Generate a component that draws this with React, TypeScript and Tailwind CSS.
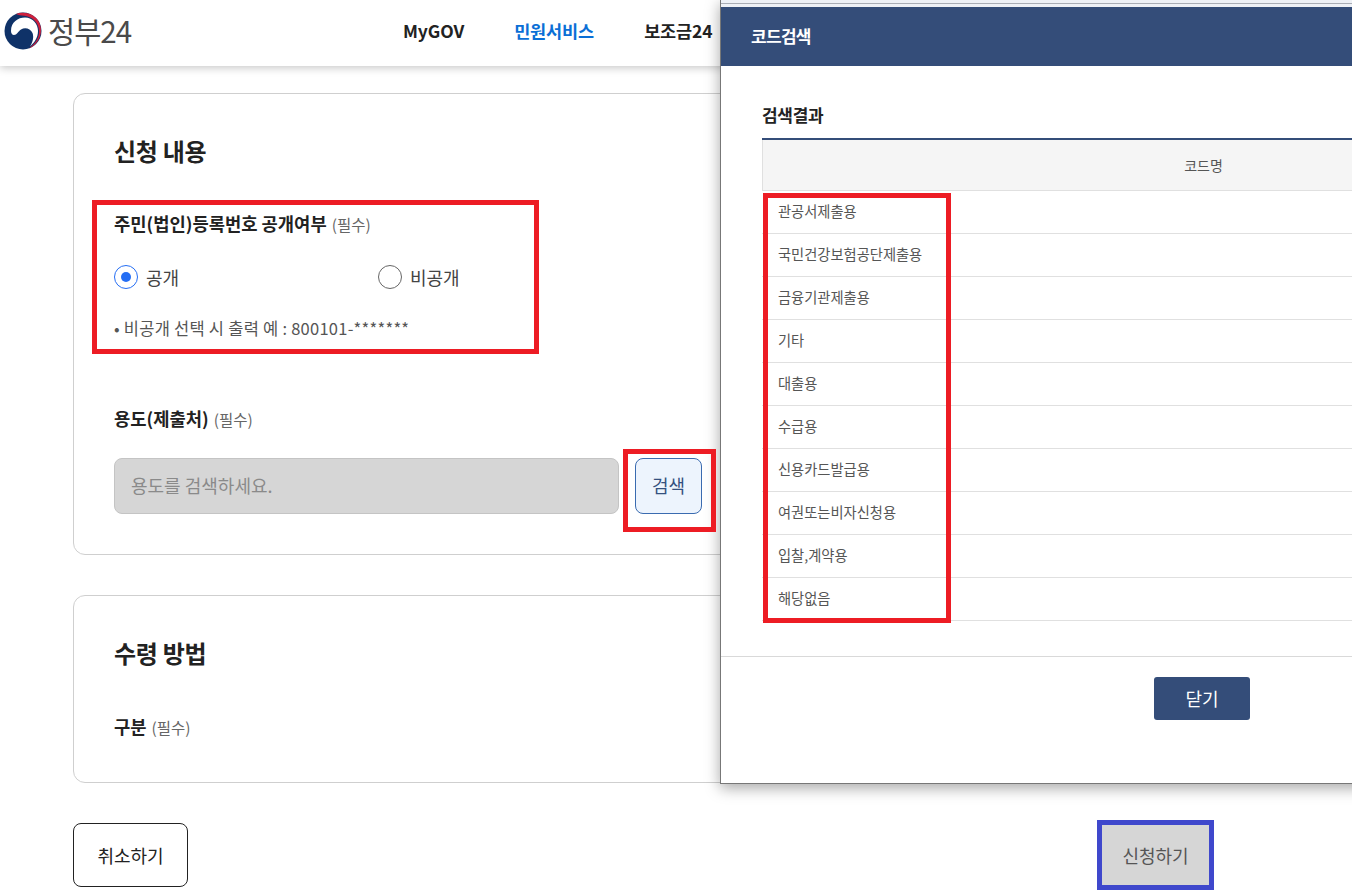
const rows = ["관공서제출용","국민건강보험공단제출용","금융기관제출용","기타","대출용","수급용","신용카드발급용","여권또는비자신청용","입찰,계약용","해당없음"];

function Logo() {
  return (
    <svg width="38" height="38" viewBox="0 0 38 38" className="shrink-0">
      <circle cx="19" cy="19" r="18.5" fill="#0f3268" />
      <path d="M7 19 C7 10 14 5.5 21 5.5 C29 5.5 34 12 34 19 C34 26 30 31 26 34.5 C29 30 30 25 28.5 21 C26.5 16.5 21 15 17 17.5 C14 19.5 13 23 10 23 C8 23 7 21 7 19 Z" fill="#ffffff" />
      <path d="M12 2 C20 -1 31 2 35 10 C39 18 37 28 28 35 L25 36.5 C32 31 35.5 25 35 18.5 C34.5 10 28 4.5 20 3.8 C17 3.5 14.5 3 12 2 Z" fill="#cd1f3c" />
    </svg>
  );
}

function Label({ text }: { text: string }) {
  return (
    <div className="flex items-baseline gap-[5px]">
      <span className="text-[17.7px] font-bold text-[#222]">{text}</span>
      <span className="text-[15.5px] text-[#666]">(필수)</span>
    </div>
  );
}

function Radio({ label, on }: { label: string; on?: boolean }) {
  return (
    <div className="flex items-center gap-[8px]">
      <span className={`w-6 h-6 rounded-full border flex items-center justify-center bg-white ${on ? "border-[#256ef4]" : "border-[#666]"}`}>
        {on && <span className="w-[10px] h-[10px] rounded-full bg-[#256ef4]" />}
      </span>
      <span className="text-[18px] text-[#444]">{label}</span>
    </div>
  );
}

export default function App() {
  return (
    <div className="relative h-[894px] w-full overflow-hidden bg-white font-['Noto_Sans_CJK_KR','Noto_Sans',sans-serif]">
      <header className="flex h-[66px] items-center bg-white pb-1 pl-1 shadow-[0_2px_8px_rgba(0,0,0,0.22)]">
        <div className="flex w-[399px] items-center gap-[6px]">
          <Logo />
          <span className="text-[29.5px] leading-none tracking-[-1px] text-[#4a4a4a]">정부24</span>
        </div>
        <nav className="flex gap-[50px] text-[17.5px] font-bold tracking-[-0.1px] text-[#222]">
          <span>MyGOV</span>
          <span className="text-[#0b6fd6]">민원서비스</span>
          <span>보조금24</span>
        </nav>
      </header>

      <main className="px-[73px] pt-[27px]">
        <section className="h-[462px] rounded-xl border border-[#cfcfcf] px-10 pt-[37px]">
          <h2 className="text-[24px] leading-[40px] font-bold tracking-[-0.3px] text-[#222]">신청 내용</h2>
          <div className="mt-[39px]">
            <Label text="주민(법인)등록번호 공개여부" />
          </div>
          <div className="mt-[27px] flex">
            <div className="w-[264px]"><Radio label="공개" on /></div>
            <Radio label="비공개" />
          </div>
          <p className="mt-[25px] text-[16.5px] tracking-[0.25px] text-[#555]">• 비공개 선택 시 출력 예 : 800101-*******</p>
          <div className="mt-[65px]">
            <Label text="용도(제출처)" />
          </div>
          <div className="mt-[26px] flex gap-4">
            <div className="flex h-14 w-[505px] items-center rounded-lg border border-[#c4c4c4] bg-[#d6d6d6] px-4 text-[18px] text-[#8a8a8a]">용도를 검색하세요.</div>
            <button className="h-14 w-[67px] rounded-lg border border-[#3a6bb0] bg-[#edf4fd] text-[18px] text-[#34507f]">검색</button>
          </div>
        </section>

        <section className="mt-10 h-[188px] rounded-xl border border-[#cfcfcf] px-10 pt-[37px]">
          <h2 className="text-[24px] leading-[40px] font-bold tracking-[-0.3px] text-[#222]">수령 방법</h2>
          <div className="mt-[40px]">
            <Label text="구분" />
          </div>
        </section>

        <div className="mt-10 flex">
          <button className="h-16 w-[115px] rounded-lg border border-[#222] bg-white text-[18px] text-[#222]">취소하기</button>
          <button className="ml-[914px] h-[60px] w-[107px] translate-y-[2px] bg-[#d6d6d6] text-[18px] text-[#555]">신청하기</button>
        </div>
      </main>

      {/* popup window */}
      <div className="absolute left-[720px] top-0 flex h-[784px] w-[960px] flex-col border-b border-l border-[#777] bg-white shadow-[0_4px_14px_rgba(0,0,0,0.35)]">
        <div className="h-[7px] shrink-0 bg-[#eef1f6]"><div className="h-[3px]" /><div className="h-px bg-[#a9adb5]" /></div>
        <div className="flex h-[59px] shrink-0 items-center bg-[#344d79] pb-[2px] pl-[30px] text-[17px] font-bold tracking-[-0.7px] text-white">코드검색</div>
        <div className="flex-1 pl-[41px] pt-[36px]">
          <h3 className="text-[17px] leading-[26px] font-bold tracking-[-0.3px] text-[#222]">검색결과</h3>
          <div className="mt-[10px] w-[882px] border-t-2 border-[#344d79]">
            <div className="flex h-[51px] items-center justify-center border-b border-l border-[#e0e0e0] bg-[#f5f5f5] text-[14px] text-[#555]">코드명</div>
            {rows.map((r) => (
              <div key={r} className="flex h-[43px] items-center border-b border-[#e0e0e0] pb-[2px] pl-[16px] text-[14.25px] text-[#555]">{r}</div>
            ))}
          </div>
          <div className="-ml-[41px] mt-[35px] border-t border-[#d9d9d9]" />
          <button className="ml-[392px] mt-[20px] h-[43px] w-[96px] rounded-[3px] bg-[#344d79] text-[18px] text-white">닫기</button>
        </div>
      </div>

      {/* annotation boxes */}
      <div className="pointer-events-none absolute left-[92px] top-[200px] h-[154px] w-[447px] border-[5px] border-[#ed1c24]" />
      <div className="pointer-events-none absolute left-[623px] top-[449px] h-[83px] w-[93px] border-[5px] border-[#ed1c24]" />
      <div className="pointer-events-none absolute left-[763px] top-[193px] h-[430px] w-[188px] border-[5px] border-[#ed1c24]" />
      <div className="pointer-events-none absolute left-[1097px] top-[820px] h-[70px] w-[117px] border-[5px] border-[#3f48cc]" />
    </div>
  );
}
